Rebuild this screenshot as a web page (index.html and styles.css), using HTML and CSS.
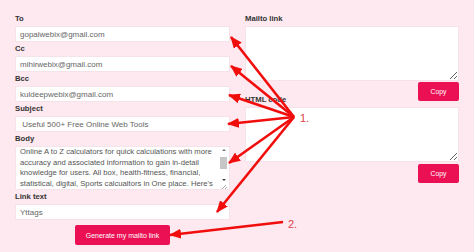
FILE: index.html
```html
<!DOCTYPE html>
<html lang="en">
<head>
<meta charset="utf-8">
<title>Mailto Link Generator</title>
<link rel="stylesheet" href="styles.css">
</head>
<body>
<div class="page">
  <div class="col">
    <label class="lbl">To</label>
    <input class="field" type="text" value="gopalwebix@gmail.com">
    <label class="lbl">Cc</label>
    <input class="field" type="text" value="mihirwebix@gmail.com">
    <label class="lbl">Bcc</label>
    <input class="field" type="text" value="kuldeepwebix@gmail.com">
    <label class="lbl">Subject</label>
    <input class="field" type="text" value=" Useful 500+ Free Online Web Tools">
    <label class="lbl">Body</label>
    <div class="body-box">
      <textarea class="body-text">Online A to Z calculators for quick calculations with more accuracy and associated information to gain in-detail knowledge for users. All box, health-fitness, financial, statistical, digital, Sports calcualtors in One place. Here's more text.</textarea>
      <div class="sbar">
        <span class="sb-up"></span>
        <span class="sb-track"><span class="sb-thumb"></span></span>
        <span class="sb-down"></span>
        <span class="sb-grip"></span>
      </div>
    </div>
    <label class="lbl">Link text</label>
    <input class="field" type="text" value="Yttags">
    <div class="gen-row"><button class="btn gen" type="button">Generate my mailto link</button></div>
  </div>
  <div class="col">
    <label class="lbl">Mailto link</label>
    <textarea class="out out-mailto"></textarea>
    <div class="act-row">
      <label class="lbl lbl-inline">HTML code</label>
      <button class="btn copy" type="button">Copy</button>
    </div>
    <textarea class="out out-html"></textarea>
    <div class="act-row act-end">
      <button class="btn copy" type="button">Copy</button>
    </div>
  </div>
  <svg class="arrows" width="474" height="252" viewBox="0 0 474 252" aria-hidden="true">
    <defs>
      <marker id="ah" markerUnits="userSpaceOnUse" markerWidth="12" markerHeight="10" refX="11" refY="5" orient="auto">
        <path d="M0,0 L12,5 L0,10 Z" fill="#f20d0d"/>
      </marker>
    </defs>
    <g stroke="#f20d0d" stroke-width="2.6" fill="none" marker-end="url(#ah)">
      <line x1="294" y1="117" x2="231" y2="37"/>
      <line x1="294" y1="117" x2="231" y2="66"/>
      <line x1="294" y1="117" x2="229" y2="95"/>
      <line x1="294" y1="117" x2="228" y2="124"/>
      <line x1="294" y1="117" x2="229" y2="163"/>
      <line x1="294" y1="117" x2="217" y2="212"/>
      <line x1="283" y1="222" x2="170" y2="235"/>
    </g>
  </svg>
  <span class="note note-1">1.</span>
  <span class="note note-2">2.</span>
</div>
</body>
</html>
```

FILE: styles.css
```css
html, body {
  margin: 0;
  padding: 0;
}
body {
  background: #fde9ef;
  font-family: "Liberation Sans", Arial, sans-serif;
  color: #333;
}
.page {
  position: relative;
  width: 474px;
  height: 252px;
  box-sizing: border-box;
  padding: 12px 15px 0 15px;
  display: grid;
  grid-template-columns: 215px 214px;
  column-gap: 15px;
  align-items: start;
}
.col {
  display: flex;
  flex-direction: column;
}
.lbl {
  display: block;
  font-size: 7.7px;
  font-weight: bold;
  line-height: 14px;
  height: 14px;
  color: #333;
}
.field {
  box-sizing: border-box;
  width: 100%;
  height: 16px;
  margin: 0;
  border: 1px solid #f6e3ea;
  background: #fff;
  padding: 0 4px;
  font-family: "Liberation Sans", Arial, sans-serif;
  font-size: 8px;
  color: #666;
  outline: none;
}
.body-box {
  display: flex;
  height: 44px;
  box-sizing: border-box;
  background: #fff;
  border: 1px solid #f6e3ea;
}
.body-text {
  flex: 1;
  min-width: 0;
  margin: 0;
  border: 0;
  padding: 0 2px 0 4px;
  resize: none;
  overflow: hidden;
  background: transparent;
  font-family: "Liberation Sans", Arial, sans-serif;
  font-size: 7.7px;
  line-height: 10.7px;
  color: #555;
  outline: none;
}
.sbar {
  width: 7px;
  margin-right: 2px;
  display: flex;
  flex-direction: column;
  align-items: center;
}
.sb-up, .sb-down {
  width: 0;
  height: 0;
  border-left: 2px solid transparent;
  border-right: 2px solid transparent;
  margin: 2px 0;
}
.sb-up {
  border-bottom: 2px solid #777;
}
.sb-down {
  border-top: 2px solid #444;
}
.sb-track {
  flex: 0 0 24px;
  width: 7px;
  display: flex;
  flex-direction: column;
  padding-top: 4px;
  box-sizing: border-box;
}
.sb-thumb {
  height: 12px;
  background: #c6c6c6;
}
.sb-grip {
  margin-top: 2px;
  width: 6px;
  height: 6px;
  background: linear-gradient(135deg, transparent 45%, #aaa 45%, #aaa 55%, transparent 55%, transparent 75%, #aaa 75%, #aaa 85%, transparent 85%);
}
.gen-row {
  display: flex;
  justify-content: center;
  margin-top: 5px;
}
.btn {
  border: 0;
  margin: 0;
  padding: 0;
  background: #ea1053;
  color: #fff;
  font-family: "Liberation Sans", Arial, sans-serif;
  border-radius: 2px;
  cursor: pointer;
}
.gen {
  width: 95px;
  height: 20px;
  font-size: 7px;
}
.out {
  box-sizing: border-box;
  width: 100%;
  margin: 0;
  border: 1px solid #f6e3ea;
  background: #fff;
  resize: vertical;
  font-family: "Liberation Sans", Arial, sans-serif;
  font-size: 8px;
  outline: none;
}
.out-mailto {
  height: 55px;
}
.out-html {
  height: 55px;
}
.act-row {
  display: flex;
  justify-content: space-between;
  align-items: flex-end;
  margin-top: 1px;
}
.act-end {
  justify-content: flex-end;
  margin-top: 2px;
}
.copy {
  width: 41px;
  height: 19px;
  font-size: 6.8px;
}
.act-row .copy {
  margin-bottom: 6px;
}
.act-end .copy {
  margin-bottom: 0;
}
.lbl-inline {
  margin-bottom: 0;
}
.arrows {
  position: absolute;
  left: 0;
  top: 0;
  pointer-events: none;
}
.note {
  position: absolute;
  font-family: "Liberation Sans", Arial, sans-serif;
  font-size: 11px;
  line-height: 12px;
  color: #e0404a;
}
.note-1 {
  left: 300px;
  top: 112px;
}
.note-2 {
  left: 288px;
  top: 218px;
}
```
